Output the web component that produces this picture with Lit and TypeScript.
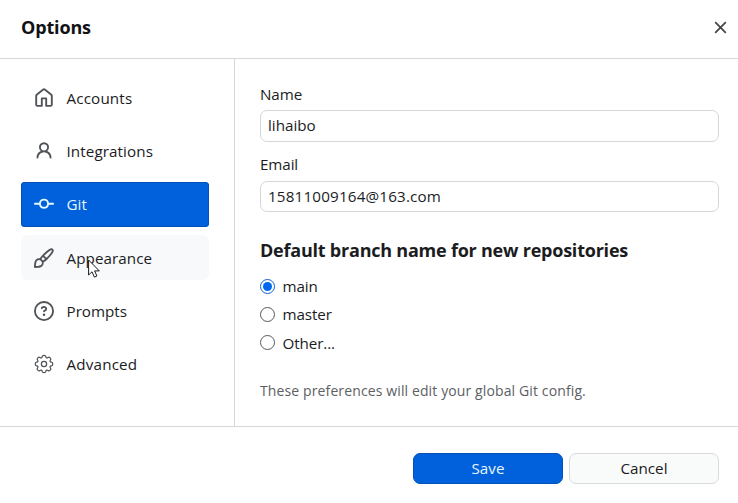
import { LitElement, html, css, svg } from "lit";
import { customElement, state } from "lit/decorators.js";
import { classMap } from "lit/directives/class-map.js";

// Outline of an eight-toothed cog, with its corners rounded by quadratic curves.
function cogPath(): string {
  const pts: [number, number][] = [];
  for (let i = 0; i < 8; i++) {
    for (const [offset, r] of [[-16, 5.3], [-11, 7.1], [11, 7.1], [16, 5.3]]) {
      const a = ((i * 45 + offset) * Math.PI) / 180;
      pts.push([8 + r * Math.sin(a), 8 - r * Math.cos(a)]);
    }
  }
  const mid = (a: number[], b: number[]) =>
    `${((a[0] + b[0]) / 2).toFixed(2)} ${((a[1] + b[1]) / 2).toFixed(2)}`;
  let d = `M${mid(pts[pts.length - 1], pts[0])}`;
  pts.forEach((p, i) => {
    d += `Q${p[0].toFixed(2)} ${p[1].toFixed(2)} ${mid(p, pts[(i + 1) % pts.length])}`;
  });
  return d + "Z";
}

const icons = {
  home: svg`<path d="M6.906.664a1.749 1.749 0 0 1 2.187 0l5.25 4.2c.415.332.657.835.657 1.367v7.019A1.75 1.75 0 0 1 13.25 15h-3.5a.75.75 0 0 1-.75-.75V9H7v5.25a.75.75 0 0 1-.75.75h-3.5A1.75 1.75 0 0 1 1 13.25V6.23c0-.531.242-1.034.657-1.366l5.25-4.2Zm1.25 1.171a.25.25 0 0 0-.312 0l-5.25 4.2a.25.25 0 0 0-.094.196v7.019c0 .138.112.25.25.25H5.5V8.25a.75.75 0 0 1 .75-.75h3.5a.75.75 0 0 1 .75.75v5.25h2.75a.25.25 0 0 0 .25-.25V6.23a.25.25 0 0 0-.094-.195Z"/>`,
  person: svg`<path d="M10.561 8.073a6.005 6.005 0 0 1 3.432 5.142.75.75 0 1 1-1.498.07 4.5 4.5 0 0 0-8.99 0 .75.75 0 0 1-1.498-.07 6.004 6.004 0 0 1 3.431-5.142 3.999 3.999 0 1 1 5.123 0ZM10.5 5a2.5 2.5 0 1 0-5 0 2.5 2.5 0 0 0 5 0Z"/>`,
  commit: svg`<path d="M11.93 8.5a4.002 4.002 0 0 1-7.86 0H.75a.75.75 0 0 1 0-1.5h3.32a4.002 4.002 0 0 1 7.86 0h3.32a.75.75 0 0 1 0 1.5Zm-1.43-.75a2.5 2.5 0 1 0-5 0 2.5 2.5 0 0 0 5 0Z"/>`,
  brush: svg`<path d="M11.134 1.535c.7-.509 1.416-.942 2.076-1.155.649-.21 1.463-.267 2.069.34.603.601.568 1.411.368 2.07-.202.668-.624 1.39-1.125 2.096-1.011 1.424-2.496 2.987-3.775 4.249-1.098 1.084-2.132 1.839-3.04 2.3a3.744 3.744 0 0 1-1.055 3.217c-.431.431-1.065.691-1.657.861-.614.177-1.294.287-1.914.357A21.151 21.151 0 0 1 .797 16H.742a.75.75 0 0 1-.742-.743v-.054a21.25 21.25 0 0 1 .13-2.284c.067-.647.187-1.287.358-1.914.17-.591.43-1.226.86-1.657a3.746 3.746 0 0 1 3.227-1.054c.466-.893 1.225-1.907 2.314-2.982 1.271-1.255 2.833-2.75 4.245-3.777ZM1.62 13.089c-.051.464-.086.929-.104 1.395.466-.018.932-.053 1.396-.104a10.511 10.511 0 0 0 1.668-.309c.526-.151.856-.325 1.011-.48a2.25 2.25 0 1 0-3.182-3.182c-.155.155-.329.485-.48 1.01a10.515 10.515 0 0 0-.309 1.67Zm10.396-10.34c-1.224.89-2.605 2.189-3.822 3.384l1.718 1.718c1.21-1.205 2.51-2.597 3.387-3.833.47-.662.78-1.227.912-1.662.134-.444.032-.551.009-.575h-.001V1.78c-.014-.014-.113-.113-.548.027-.432.14-.995.462-1.655.942Zm-4.832 7.266-.001.001a9.859 9.859 0 0 0 1.63-1.142L7.155 7.216a9.7 9.7 0 0 0-1.161 1.607c.482.302.889.71 1.19 1.192Z"/>`,
  question: svg`<path d="M0 8a8 8 0 1 1 16 0A8 8 0 0 1 0 8Zm8-6.5a6.5 6.5 0 1 0 0 13 6.5 6.5 0 0 0 0-13ZM6.92 6.085h.001a.749.749 0 1 1-1.342-.67c.169-.339.436-.701.849-.977C6.845 4.16 7.369 4 8 4a2.756 2.756 0 0 1 1.637.525c.503.377.863.965.863 1.725 0 .448-.115.83-.329 1.15-.205.307-.47.513-.692.662-.109.072-.22.138-.313.195l-.006.004a6.24 6.24 0 0 0-.26.16.952.952 0 0 0-.276.245.75.75 0 0 1-1.248-.832c.184-.264.42-.489.692-.661.103-.067.207-.132.313-.195l.007-.004c.1-.061.182-.11.258-.161a.969.969 0 0 0 .277-.245C8.96 6.514 9 6.427 9 6.25a.612.612 0 0 0-.262-.525A1.27 1.27 0 0 0 8 5.5c-.369 0-.595.09-.74.187a1.01 1.01 0 0 0-.34.398ZM9 11a1 1 0 1 1-2 0 1 1 0 0 1 2 0Z"/>`,
  gear: svg`<g fill="none" stroke="currentColor" stroke-width="1"><path d=${cogPath()} /><circle cx="8" cy="8" r="2.1"/></g>`,
};

const tabs: { label: string; icon: keyof typeof icons; cls: string }[] = [
  { label: "Accounts", icon: "home", cls: "accounts" },
  { label: "Integrations", icon: "person", cls: "integrations" },
  { label: "Git", icon: "commit", cls: "git" },
  { label: "Appearance", icon: "brush", cls: "appearance" },
  { label: "Prompts", icon: "question", cls: "prompts" },
  { label: "Advanced", icon: "gear", cls: "advanced" },
];

@customElement("app-root")
export class AppRoot extends LitElement {
  @state() private tab = "Git";
  @state() private branch = "main";

  static styles = css`
    :host {
      display: flex;
      flex-direction: column;
      height: 503px;
      position: relative;
      overflow: hidden;
      background: #fff;
      color: #1b1c1e;
      font: 15.2px/20px "Open Sans", "Noto Sans", sans-serif;
      letter-spacing: -0.1px;
    }
    * { box-sizing: border-box; }
    header {
      flex: none;
      height: 59px;
      border-bottom: 1px solid #d5d7d9;
      display: flex;
      align-items: center;
      justify-content: space-between;
      padding: 0 11px 4px 21px;
    }
    h1 { margin: 0; font-size: 18px; font-weight: 700; line-height: 24px; letter-spacing: -0.15px; color: #111214; }
    .close { width: 13px; height: 13px; display: block; stroke: #45484b; stroke-width: 1.8; fill: none; }
    .body { flex: 1; display: flex; min-height: 0; }
    nav {
      width: 235px;
      border-right: 1px solid #d5d7d9;
      padding: 16.3px 25px 0 21px;
      display: flex;
      flex-direction: column;
      gap: 8.3px;
    }
    .tab {
      height: 45px;
      flex: none;
      display: flex;
      align-items: center;
      gap: 12.5px;
      padding: 0 13px;
      border-radius: 4px;
      letter-spacing: 0.08px;
      cursor: default;
    }
    .tab svg { width: 20px; height: 20px; fill: currentColor; color: #505357; flex: none; }
    .selected { background: #0161dc; color: #e6f7ff; font-weight: 500; box-shadow: inset 0 0 0 1px #0452b8; }
    .tab.selected svg { color: #e6f7ff; }
    .accounts { letter-spacing: 0.15px; }
    .integrations { letter-spacing: 0.1px; }
    .prompts { letter-spacing: 0; }
    .advanced { letter-spacing: 0.18px; }
    .hovered { background: #f8f9fb; border-radius: 7px; }
    main { flex: 1; padding: 25px 19px 0 25px; display: flex; flex-direction: column; }
    label.caption { line-height: 20px; margin-bottom: 6px; }
    input.field {
      font: inherit;
      letter-spacing: 0;
      color: inherit;
      height: 32px;
      width: 459px;
      padding: 0 7px 2px;
      border: 1px solid #d5d7d9;
      border-radius: 7px;
      background: #fff;
      outline: none;
      margin: 0 0 12px;
    }
    input.email { height: 31px; margin-top: 1px; padding-bottom: 1px; letter-spacing: 0.18px; }
    h2 { margin: 13px 0 13px; font-size: 18px; line-height: 26px; font-weight: 700; letter-spacing: -0.22px; white-space: nowrap; }
    .radios { display: flex; flex-direction: column; gap: 8.4px; }
    .radio { display: flex; align-items: center; gap: 7.5px; height: 20px; }
    .dot { width: 15px; height: 15px; border: 1px solid #55585b; border-radius: 50%; display: grid; place-items: center; }
    .dot.on { border: 1.5px solid #0b62d6; }
    .dot.on::after { content: ""; width: 9px; height: 9px; border-radius: 50%; background: #0068ef; }
    .note { margin: 28.4px 0 0; font-size: 14px; letter-spacing: 0.12px; color: #5c6064; white-space: nowrap; }
    footer {
      flex: none;
      height: 77px;
      border-top: 1px solid #d5d7d9;
      display: flex;
      justify-content: flex-end;
      gap: 6px;
      padding: 26px 19px 0 0;
    }
    button {
      font: inherit;
      letter-spacing: 0;
      color: inherit;
      width: 150px;
      height: 31px;
      padding: 0 0 2px;
      border: 1px solid #d9dbdd;
      border-radius: 7px;
      background: #f9fafa;
    }
    .save { background: #0161dc; border-color: #0452b8; color: #e6f7ff; font-weight: 500; }
    .pointer { position: absolute; left: 88px; top: 259px; width: 12px; height: 19px; }
  `;

  render() {
    return html`
      <header>
        <h1>Options</h1>
        <svg class="close" viewBox="0 0 13 13"><path d="M1.2 1.2 11.8 11.8M11.8 1.2 1.2 11.8" /></svg>
      </header>
      <div class="body">
        <nav>
          ${tabs.map(
            (t) => html`<div
              class=${classMap({ tab: true, [t.cls]: true, selected: t.label === this.tab, hovered: t.label === "Appearance" })}
              @click=${() => (this.tab = t.label)}
            ><svg viewBox="0 0 16 16">${icons[t.icon]}</svg><span>${t.label}</span></div>`
          )}
        </nav>
        <main>
          <label class="caption">Name</label>
          <input class="field" .value=${"lihaibo"} />
          <label class="caption">Email</label>
          <input class="field email" .value=${"15811009164@163.com"} />
          <h2>Default branch name for new repositories</h2>
          <div class="radios">
            ${["main", "master", "Other..."].map(
              (b) => html`<div class="radio" @click=${() => (this.branch = b)}>
                <span class=${classMap({ dot: true, on: b === this.branch })}></span><span>${b}</span>
              </div>`
            )}
          </div>
          <p class="note">These preferences will edit your global Git config.</p>
        </main>
      </div>
      <footer>
        <button class="save">Save</button>
        <button>Cancel</button>
      </footer>
      <svg class="pointer" viewBox="0 0 12 19">
        <path d="M.6 1v15l3.4-3.2 2.4 5.3 2.5-1.1-2.3-5.1h4.7Z" fill="#fff" stroke="#17181a" stroke-width="1" />
      </svg>
    `;
  }
}
